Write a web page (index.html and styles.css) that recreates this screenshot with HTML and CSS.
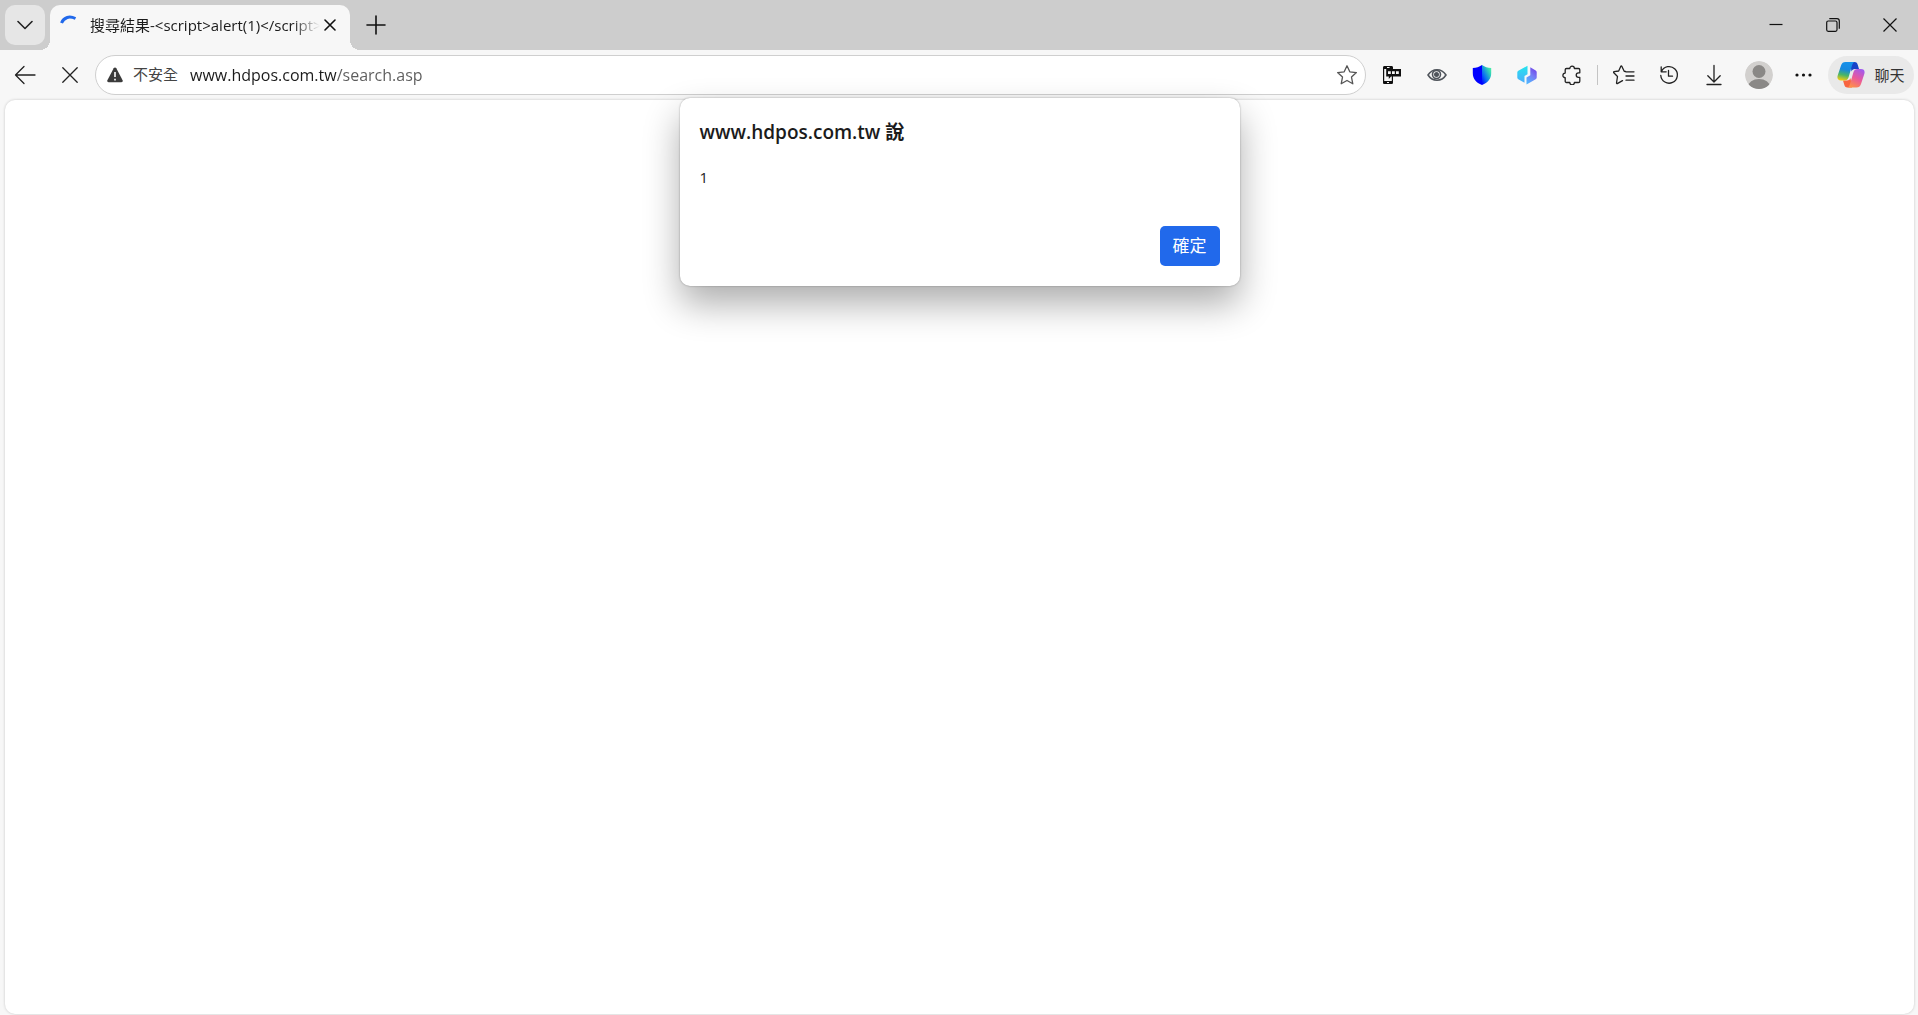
FILE: index.html
```html
<!DOCTYPE html>
<html lang="zh-Hant">
<head>
    <meta charset="UTF-8">
    <meta name="viewport" content="width=device-width, initial-scale=1.0">
    <title>搜尋結果</title>
    <link rel="stylesheet" href="styles.css">
</head>
<body>
    <header class="tab-bar">
        <button class="tab-menu" aria-label="Tab menu">
            <svg width="16" height="10" viewBox="0 0 16 10"><path d="M1 1.5l7 7 7-7"/></svg>
        </button>
        <div class="tab">
            <svg class="spinner" width="20" height="20" viewBox="0 0 20 20"><path d="M1.500 8C4 2 9.500 .8 15.500 3.500"/></svg>
            <span class="tab-title">搜尋結果-&lt;script&gt;alert(1)&lt;/script&gt;</span>
            <button class="tab-close" aria-label="Close tab">
                <svg width="12" height="12" viewBox="0 0 12 12"><path d="M1 1l10 10M11 1L1 11"/></svg>
            </button>
        </div>
        <button class="new-tab" aria-label="New tab">
            <svg width="20" height="20" viewBox="0 0 20 20"><path d="M10 1v18M1 10h18"/></svg>
        </button>
        <div class="window-buttons">
            <button aria-label="Minimize">
                <svg width="14" height="14" viewBox="0 0 14 14"><path d="M.5 6.500h13"/></svg>
            </button>
            <button aria-label="Restore">
                <svg width="14" height="14" viewBox="0 0 14 14"><rect x=".7" y="3" width="10.300" height="10.300" rx="1.500"/><path d="M3.300 .7H11a2.300 2.300 0 0 1 2.300 2.300v7.700"/></svg>
            </button>
            <button aria-label="Close">
                <svg width="14" height="14" viewBox="0 0 14 14"><path d="M.5 .5l13 13M13.500 .5l-13 13"/></svg>
            </button>
        </div>
    </header>

    <nav class="toolbar">
        <button class="tool" aria-label="Back">
            <svg width="22" height="20" viewBox="0 0 22 20"><path d="M21 10H1.500M10 1.500L1.500 10l8.500 8.500"/></svg>
        </button>
        <button class="tool" aria-label="Stop">
            <svg width="16" height="16" viewBox="0 0 16 16"><path d="M.8 .8l14.400 14.400M15.200 .8L.8 15.200"/></svg>
        </button>
        <form class="address-bar">
            <svg class="warning" width="16" height="16" viewBox="0 0 16 16"><path class="solid" d="M8 .5c.6 0 1 .3 1.300.8l6.300 12c.5 1-.1 1.900-1.200 1.900H1.600C.5 15.200-.1 14.300.4 13.300l6.300-12C7 .8 7.400.5 8 .5z"/><path class="mark" d="M8 5v5M8 11.800v1.700"/></svg>
            <label for="url">不安全</label>
            <input type="text" id="url" value="www.hdpos.com.tw/search.asp" spellcheck="false">
            <button type="button" class="favorite" aria-label="Favorite">
                <svg width="22" height="22" viewBox="0 0 22 22"><path d="M11 1.800l2.800 6 6.600.8-4.900 4.500 1.300 6.700-5.800-3.300-5.800 3.300 1.300-6.700L1.600 8.600l6.600-.8z"/></svg>
            </button>
        </form>
        <button class="tool" aria-label="Phone">
            <svg width="20" height="20" viewBox="0 0 20 20"><path class="black" d="M2.500 1h7c1 0 1.500.6 1.500 1.500V4h8v7.500h-8v6c0 1-.6 1.500-1.500 1.500h-7C1.500 19 1 18.500 1 17.500v-15C1 1.600 1.500 1 2.500 1z"/><path class="paper" d="M2.200 4h2v7.500h2.600V14L9 11.500h.8V16H2.200zM6 6.300h2.800V9H6zM10 6.300h2.800V9H10zM14 6.300h2.800V9H14zM5 2h2.500v1H5zM5 17h2v1H5z"/></svg>
        </button>
        <button class="tool" aria-label="Viewer">
            <svg class="eye" width="20" height="14" viewBox="0 0 20 14"><path d="M1 7c4.500-7 13.500-7 18 0-4.500 7-13.500 7-18 0z"/><circle cx="9.500" cy="6.500" r="4"/><circle class="pupil" cx="9.500" cy="6.500" r="2.500"/></svg>
        </button>
        <button class="tool" aria-label="Shield">
            <svg width="20" height="20" viewBox="0 0 20 20">
                <defs><linearGradient id="shield" x1="1" y1="0" x2=".1" y2="1"><stop offset="0" stop-color="#5cffa0"/><stop offset=".3" stop-color="#30d0b8"/><stop offset=".7" stop-color="#0868f5"/><stop offset="1" stop-color="#0000ff"/></linearGradient></defs>
                <path fill="#0000ff" stroke="none" d="M10 0v20C4 17.500.8 14 .8 8V3C4.500 2.800 7 2 10 0z"/>
                <path fill="url(#shield)" stroke="none" d="M10 0c3 2 5.500 2.800 9.200 3v5c0 6-3.200 9.500-9.200 12z"/>
            </svg>
        </button>
        <button class="tool" aria-label="Hexagon">
            <svg width="20" height="20" viewBox="0 0 20 20">
                <defs>
                    <linearGradient id="hexLeft" x1=".5" y1="0" x2=".5" y2="1"><stop offset="0" stop-color="#25e6ed"/><stop offset="1" stop-color="#4cabfc"/></linearGradient>
                    <linearGradient id="hexRight" x1=".8" y1="0" x2=".3" y2="1"><stop offset="0" stop-color="#7040e8"/><stop offset=".5" stop-color="#7580f5"/><stop offset="1" stop-color="#50b5ff"/></linearGradient>
                </defs>
                <path fill="url(#hexLeft)" stroke="none" d="M10.500 .8v8.400L7.500 11v6.800L1.300 14.200Q.3 13.600 .3 12.500V7.500Q.3 6.400 1.300 5.800z"/>
                <path fill="url(#hexRight)" stroke="none" d="M13.300 2.300l5.400 3.300q1 .6 1 1.700v5.200q0 1.100-1 1.700L9.500 19.500v-7l3.800-2.300z"/>
            </svg>
        </button>
        <button class="tool" aria-label="Extensions">
            <svg width="20" height="20" viewBox="0 0 20 20"><path d="M4.500 3.500h3.300a2.300 2.300 0 0 1 4.600 0h4.100c.8 0 1.300.5 1.300 1.300v3h-1.300a2.300 2.300 0 0 0 0 4.600h1.300v3.800c0 .8-.5 1.300-1.300 1.300h-4.100a2.300 2.300 0 0 1-4.600 0H4.500c-.8 0-1.300-.5-1.300-1.300v-3.500a2.300 2.300 0 0 1 0-4.600V4.800c0-.8.5-1.300 1.300-1.300z"/></svg>
        </button>
        <span class="divider"></span>
        <button class="tool" aria-label="Favorites">
            <svg width="22" height="20" viewBox="0 0 22 20"><path d="M12.500 6.500l-1.300-.2L8.800 1.200c-.2-.4-.8-.4-1 0L5.700 6l-4.600.7c-.5.100-.7.600-.3 1l3.700 3.800-1 6.500c0 .5.400.8.800.6l5.200-3"/><path d="M13 6.800h8M13 11h8M13 15.200h8"/></svg>
        </button>
        <button class="tool" aria-label="History">
            <svg width="20" height="20" viewBox="0 0 20 20"><path d="M2.500 6.500a8.300 8.300 0 1 1-.7 4M2.200 1.800v5h5M9.500 5.500v5.700h4"/></svg>
        </button>
        <button class="tool" aria-label="Downloads">
            <svg width="16" height="22" viewBox="0 0 16 22"><path d="M8 1.500V18M1.800 11.800L8 18l6.200-6.200M1 20.500h14"/></svg>
        </button>
        <button class="tool" aria-label="Profile">
            <svg width="28" height="28" viewBox="0 0 28 28"><defs><clipPath id="round"><circle cx="14" cy="14" r="14"/></clipPath></defs><g clip-path="url(#round)" stroke="none"><circle cx="14" cy="14" r="14" fill="#d2d0ce"/><circle cx="14" cy="10.500" r="6.500" fill="#8a8886"/><ellipse cx="14" cy="26" rx="11" ry="8" fill="#8a8886"/></g></svg>
        </button>
        <button class="tool" aria-label="More">
            <svg width="18" height="4" viewBox="0 0 18 4"><g class="black"><circle cx="2" cy="2" r="1.600"/><circle cx="8.500" cy="2" r="1.600"/><circle cx="15" cy="2" r="1.600"/></g></svg>
        </button>
        <button class="chat">
            <svg width="28" height="28" viewBox="0 0 28 28">
                <defs>
                    <linearGradient id="coolRibbon" x1=".5" y1="0" x2=".3" y2="1"><stop offset="0" stop-color="#1591ea"/><stop offset=".4" stop-color="#1688df"/><stop offset=".7" stop-color="#48b568"/><stop offset="1" stop-color="#f2cb10"/></linearGradient>
                    <linearGradient id="warmRibbon" x1=".8" y1="0" x2=".3" y2="1"><stop offset="0" stop-color="#a05af0"/><stop offset=".5" stop-color="#e9589c"/><stop offset="1" stop-color="#ff9048"/></linearGradient>
                </defs>
                <g stroke="none">
                    <path fill="#1742c8" d="M13 1h4.500c2 0 2.800 1.200 3.300 3l1.200 4h-4c-2 0-3 1-3.500 2.500z"/>
                    <path fill="#f8653f" d="M15 26.500h-4.500c-2 0-2.800-1-3.300-3L6 19.500h4c2 0 3-1 3.500-2.500z"/>
                    <path fill="url(#coolRibbon)" d="M8.500 1H18c-1.700.2-2.400 1.500-3 3.500l-3.500 12c-.7 2-1.800 3-4 3H4c-3 0-4.200-2-3.300-5L4 4.500C4.800 2 6.200 1 8.500 1z"/>
                    <path fill="url(#warmRibbon)" d="M19.500 26.500H10c1.700-.2 2.400-1.500 3-3.500l3.500-12c.7-2 1.800-3 4-3H24c3 0 4.200 2 3.300 5L24 23c-.8 2.500-2.200 3.500-4.500 3.500z"/>
                </g>
            </svg>
            <span>聊天</span>
        </button>
    </nav>

    <main class="page">
        <dialog class="alert" open aria-labelledby="alert-title">
            <h1 id="alert-title">www.hdpos.com.tw 說</h1>
            <p>1</p>
            <form method="dialog">
                <button class="confirm">確定</button>
            </form>
        </dialog>
    </main>
</body>
</html>
```

FILE: styles.css
```css
* {
    box-sizing: border-box;
}
body {
    font-family: "Open Sans", "Noto Sans CJK TC", sans-serif;
    background-color: #f7f7f7;
    color: #1b1b1b;
    display: flex;
    flex-direction: column;
    height: 100vh;
    margin: 0;
    overflow: hidden;
}
button {
    display: flex;
    align-items: center;
    justify-content: center;
    flex: none;
    padding: 0;
    border: none;
    background: none;
    color: inherit;
    font-family: inherit;
}
svg {
    display: block;
    flex: none;
    fill: none;
    stroke: #222;
    stroke-width: 1.3;
    stroke-linecap: round;
    stroke-linejoin: round;
}
.black {
    fill: #111;
    stroke: none;
}
.paper {
    fill: #f7f7f7;
    stroke: none;
}
.tab-bar {
    display: flex;
    flex: none;
    height: 50px;
    padding: 5px 0 0 5px;
    background-color: #cdcdcd;
}
.tab-menu {
    width: 40px;
    height: 40px;
    border-radius: 10px;
    background-color: #e6e6e6;
}
.tab-menu svg {
    stroke-width: 1.6;
}
.tab {
    position: relative;
    display: flex;
    align-items: center;
    width: 300px;
    height: 45px;
    margin-left: 5px;
    padding: 0 10px 5px;
    border-radius: 10px 10px 0 0;
    background-color: #f7f7f7;
}
.tab::before,
.tab::after {
    content: "";
    position: absolute;
    bottom: 0;
    width: 10px;
    height: 10px;
}
.tab::before {
    right: 100%;
    background: radial-gradient(circle at 0 0, transparent 10px, #f7f7f7 10px);
}
.tab::after {
    left: 100%;
    background: radial-gradient(circle at 100% 0, transparent 10px, #f7f7f7 10px);
}
.spinner {
    stroke: #2169eb;
    stroke-width: 3;
    stroke-linecap: butt;
}
.tab-title {
    flex: 1;
    margin-left: 10px;
    overflow: hidden;
    white-space: nowrap;
    font-size: 15px;
    line-height: 20px;
    -webkit-mask-image: linear-gradient(90deg, #000 88%, transparent);
    mask-image: linear-gradient(90deg, #000 88%, transparent);
}
.tab-close {
    width: 20px;
    height: 20px;
}
.tab-close svg,
.new-tab svg {
    stroke: #111;
    stroke-width: 1.6;
}
.new-tab {
    width: 40px;
    height: 40px;
    margin-left: 6px;
}
.window-buttons {
    display: flex;
    margin-left: auto;
}
.window-buttons button {
    width: 57px;
    height: 40px;
}
.window-buttons svg {
    stroke: #111;
    stroke-width: 1.2;
    stroke-linecap: butt;
}
.toolbar {
    display: flex;
    align-items: center;
    flex: none;
    height: 50px;
    padding: 0 4px 0 2px;
}
.tool {
    width: 45px;
    height: 40px;
}
.address-bar {
    display: flex;
    align-items: center;
    flex: 1;
    height: 40px;
    margin: 0 3px;
    padding: 0 7px 0 11px;
    border: 1px solid #cfcfcf;
    border-radius: 20px;
    background-color: #fff;
}
.warning {
    stroke: none;
}
.warning .solid {
    fill: #3b3b3b;
}
.warning .mark {
    stroke: #fff;
    stroke-width: 1.6;
    stroke-linecap: butt;
}
.address-bar label {
    margin-left: 10px;
    padding-bottom: 2px;
    color: #444;
    font-size: 15px;
    line-height: 20px;
}
.address-bar input {
    flex: 1;
    min-width: 0;
    height: 30px;
    margin-left: 12px;
    padding: 0;
    border: none;
    outline: none;
    /* host is darker than the path */
    background: linear-gradient(90deg, #1b1b1b 147px, #5c5c5c 147px);
    -webkit-background-clip: text;
    background-clip: text;
    color: transparent;
    font-family: inherit;
    font-size: 16px;
}
.favorite svg {
    stroke: #555;
}
.eye {
    stroke: #50555c;
    stroke-width: 1.6;
}
.eye .pupil {
    fill: #50555c;
    stroke: none;
}
.divider {
    width: 1px;
    height: 20px;
    margin: 0 3px;
    background-color: #c4c4c4;
}
.chat {
    gap: 9px;
    width: 86px;
    height: 38px;
    margin-left: 2px;
    border-radius: 19px;
    background-color: #e9e9e9;
    color: #333;
    font-size: 15px;
}
.chat span {
    padding-bottom: 2px;
}
.page {
    position: relative;
    flex: 1;
    margin: 0 4px 1px 5px;
    border-radius: 10px;
    background-color: #fff;
    box-shadow: 0 0 3px rgba(0, 0, 0, 0.2);
}
.alert {
    position: absolute;
    top: -2px;
    right: 0;
    left: 0;
    width: 560px;
    max-width: 100%;
    margin: 0 auto;
    padding: 19px 20px 20px;
    border: none;
    border-radius: 10px;
    background-color: #fff;
    color: #1b1b1b;
    box-shadow: 0 0 2px rgba(0, 0, 0, 0.35), 0 18px 36px rgba(0, 0, 0, 0.32);
}
.alert h1 {
    margin: 0;
    font-size: 19px;
    font-weight: 600;
    line-height: 30px;
}
.alert p {
    margin: 15px 0 34px;
    font-size: 15px;
    line-height: 30px;
}
.confirm {
    width: 60px;
    height: 40px;
    margin-left: auto;
    padding-bottom: 4px;
    border-radius: 5px;
    background-color: #2169eb;
    color: #fff;
    font-size: 17px;
}
```
